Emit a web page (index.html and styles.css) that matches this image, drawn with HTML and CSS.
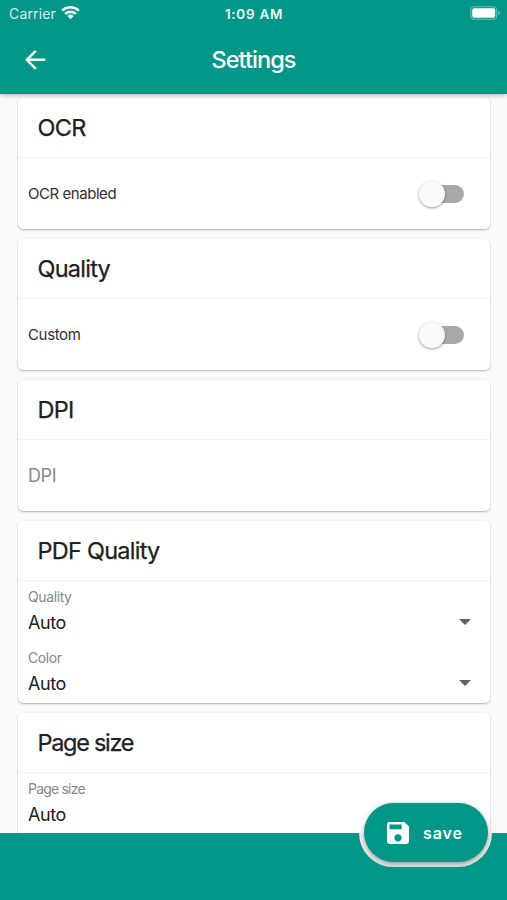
FILE: index.html
```html
<!DOCTYPE html>
<html lang="en">
<head>
<meta charset="utf-8">
<title>Settings</title>
<link rel="stylesheet" href="styles.css">
</head>
<body>
<div class="screen">
  <header class="topbar">
    <div class="status">
      <div class="carrier"><span>Carrier</span>
        <svg class="wifi" viewBox="0 0 19 15" width="19" height="15"><g fill="none" stroke="#fff" stroke-width="2.6"><path d="M1.2 5.6a12 12 0 0 1 16.6 0"/><path d="M4.2 8.9a7.7 7.7 0 0 1 10.6 0"/></g><path fill="#fff" d="M9.5 14.2 6.4 11a4.5 4.5 0 0 1 6.2 0z"/></svg>
      </div>
      <span class="clock">1:09 AM</span>
      <svg class="battery" viewBox="0 0 31 14" width="31" height="14"><rect x=".7" y=".7" width="26" height="12.6" rx="3.6" fill="none" stroke="#fff" stroke-opacity=".4" stroke-width="1.1"/><rect x="2.2" y="2.2" width="23" height="9.6" rx="2" fill="#fff"/><path d="M28.3 4.7c2.2.8 2.2 3.8 0 4.6z" fill="#fff" fill-opacity=".45"/></svg>
    </div>
    <div class="appbar">
      <svg class="back" viewBox="0 0 22 22" width="22" height="22"><path d="M10.8 1.8 1.8 10.8l9 9M2 10.8H20.2" fill="none" stroke="#fff" stroke-width="2.4"/></svg>
      <h1>Settings</h1>
    </div>
  </header>
  <main class="content">
    <section class="card">
      <h2>OCR</h2>
      <div class="row enabled"><span>OCR enabled</span><i class="switch"></i></div>
    </section>
    <section class="card">
      <h2>Quality</h2>
      <div class="row"><span>Custom</span><i class="switch"></i></div>
    </section>
    <section class="card">
      <h2>DPI</h2>
      <div class="row field"><span>DPI</span></div>
    </section>
    <section class="card tall">
      <h2>PDF Quality</h2>
      <div class="select"><label>Quality</label><div class="value"><span>Auto</span><i class="caret"></i></div></div>
      <div class="select"><label>Color</label><div class="value"><span>Auto</span><i class="caret"></i></div></div>
    </section>
    <section class="card tall page-size">
      <h2>Page size</h2>
      <div class="select"><label>Page size</label><div class="value"><span>Auto</span><i class="caret"></i></div></div>
    </section>
  </main>
  <footer class="bottombar"></footer>
  <div class="notch">
    <button class="save">
      <svg viewBox="0 0 22 22" width="22" height="22"><path fill="#fff" fill-rule="evenodd" d="M2.4 0h15L22 4.6v15a2.4 2.4 0 0 1-2.4 2.4H2.4A2.4 2.4 0 0 1 0 19.6V2.4A2.4 2.4 0 0 1 2.4 0zM2.5 2.5v4.8h12.2V2.5zM11 12.2a3.6 3.6 0 1 0 0 7.2 3.6 3.6 0 0 0 0-7.2z"/></svg>
      <span>save</span>
    </button>
  </div>
</div>
</body>
</html>
```

FILE: styles.css
```css
* { box-sizing: border-box; }
body { margin: 0; font-family: Inter, "Liberation Sans", sans-serif; }
.screen {
  position: relative;
  width: 507px;
  height: 900px;
  overflow: hidden;
  display: flex;
  flex-direction: column;
  background: #fafafa;
  color: #202020;
}
.topbar {
  position: relative;
  z-index: 1;
  height: 94px;
  flex: none;
  background: #009688;
  color: #fff;
  box-shadow: 0 1px 5px rgba(0, 0, 0, .3);
}
.status {
  height: 27px;
  display: grid;
  grid-template-columns: 1fr auto 1fr;
  align-items: center;
  padding: 0 6px 0 9px;
}
.carrier { display: flex; align-items: center; gap: 5px; font-size: 14px; color: #d9f0ed; letter-spacing: .15px; }
.wifi { margin-top: -2px; }
.clock { margin-right: 2px; font-size: 13.5px; font-weight: 600; letter-spacing: .7px; color: #e9f7f5; }
.battery { justify-self: end; margin-top: -1px; }
.appbar {
  height: 65px;
  display: grid;
  grid-template-columns: 1fr auto 1fr;
  align-items: center;
  padding: 0 25px;
}
h1 { margin: 0; font-size: 23.5px; font-weight: 500; letter-spacing: -.95px; }
.content {
  flex: none;
  height: 739px;
  overflow: hidden;
  padding: 4px 17px 0 18px;
  display: flex;
  flex-direction: column;
  gap: 10px;
}
.card {
  flex: none;
  height: 131px;
  display: flex;
  flex-direction: column;
  background: #fff;
  border-radius: 5px;
  box-shadow: 0 1px 2px rgba(0, 0, 0, .28), 0 0 2px rgba(0, 0, 0, .06);
}
.card.tall { height: 182px; }
h2 {
  margin: 0;
  height: 60px;
  flex: none;
  padding-left: 19.5px;
  border-bottom: 1px solid #f3f3f3;
  font-size: 23.5px;
  font-weight: 400;
  line-height: 60px;
  letter-spacing: -.75px;
  -webkit-text-stroke: .25px #202020;
}
.page-size h2 { letter-spacing: -1.3px; }
.row {
  flex: 1;
  display: flex;
  align-items: center;
  justify-content: space-between;
  padding: 0 26px 0 10px;
  font-size: 15px;
  letter-spacing: -.35px;
  color: #303030;
}
.enabled { letter-spacing: -.45px; }
.field { font-size: 18px; color: #888; letter-spacing: -.4px; }
.switch {
  position: relative;
  width: 44px;
  height: 18px;
  border-radius: 9px;
  background: #a9a9a9;
}
.switch::before {
  content: "";
  position: absolute;
  left: -1px;
  top: -4px;
  width: 26px;
  height: 26px;
  border-radius: 50%;
  background: #fafafa;
  box-shadow: 0 1px 3px rgba(0, 0, 0, .4);
}
.select { height: 61px; flex: none; padding: 6px 19px 0 10px; }
label { display: block; font-size: 14px; line-height: 19px; color: #888; letter-spacing: -.4px; }
.page-size label { letter-spacing: -.8px; }
.value {
  height: 32px;
  display: flex;
  align-items: center;
  justify-content: space-between;
  font-size: 18px;
  letter-spacing: -.4px;
}
.caret {
  border: 6px solid transparent;
  border-top-color: #616161;
  border-bottom: 0;
}
.bottombar { flex: 1; background: #009688; }
.notch {
  position: absolute;
  left: 359px;
  top: 799px;
  width: 133px;
  height: 68px;
  padding: 4px 4px 5px 5px;
  border-radius: 34px;
  background: linear-gradient(transparent 34px, #f2f2f2 34px, #dedede 66px);
}
.save {
  width: 124px;
  height: 59px;
  border: 0;
  border-radius: 30px;
  display: flex;
  align-items: center;
  padding: 0 0 0 23px;
  gap: 14px;
  background: #009688;
  color: #fff;
  font: 600 16px Inter, "Liberation Sans", sans-serif;
  letter-spacing: .9px;
  box-shadow: 0 1px 4px rgba(0, 0, 0, .35);
}
```
